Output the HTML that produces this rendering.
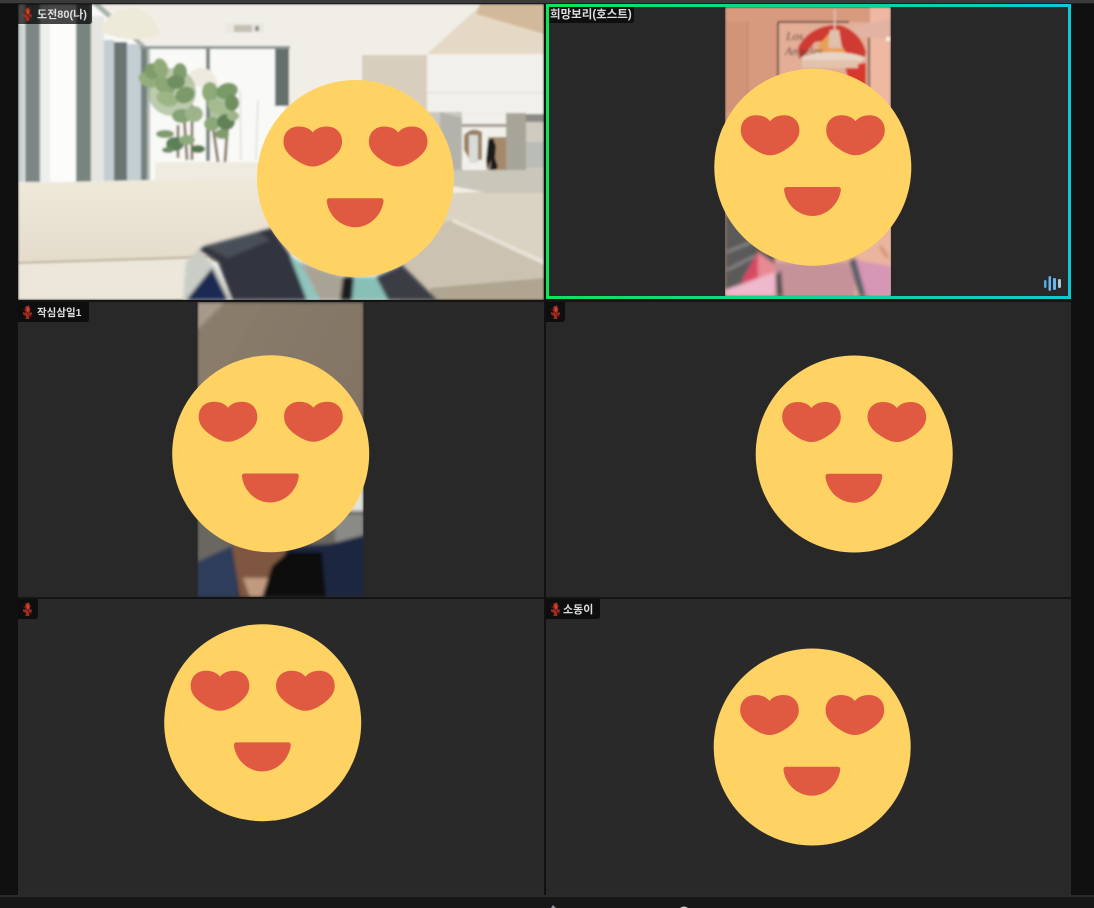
<!DOCTYPE html>
<html><head><meta charset="utf-8"><title>Video meeting</title>
<style>
html,body{margin:0;padding:0;background:#111;width:1094px;height:908px;overflow:hidden}
svg{display:block}
text{font-family:"Liberation Sans","Noto Sans CJK KR",sans-serif;font-weight:700;fill:#dedede}
</style></head><body>
<svg width="1094" height="908" viewBox="0 0 1094 908" xmlns="http://www.w3.org/2000/svg">
<defs>
<filter id="b1" x="-5%" y="-5%" width="110%" height="110%"><feGaussianBlur stdDeviation="1"/></filter>
<filter id="b2" x="-10%" y="-10%" width="120%" height="120%"><feGaussianBlur stdDeviation="1.800"/></filter>
<clipPath id="c1"><rect x="18" y="4" width="526" height="296"/></clipPath>
<clipPath id="c2"><rect x="725" y="7" width="166" height="289"/></clipPath>
<clipPath id="c3"><rect x="197.500" y="302" width="166" height="295"/></clipPath>
<linearGradient id="bd" x1="0" x2="1" y1="0" y2="0"><stop offset="0" stop-color="#0ce45a"/><stop offset="1" stop-color="#0cc9d6"/></linearGradient>
<linearGradient id="sofa" x1="0" x2="0" y1="0" y2="1"><stop offset="0" stop-color="#efe9db"/><stop offset="1" stop-color="#e4dccb"/></linearGradient>
<linearGradient id="wall3" x1="0" x2="1" y1="0" y2="1"><stop offset="0" stop-color="#8b7d6c"/><stop offset="1" stop-color="#7e7060"/></linearGradient>
<g id="emoji">
<circle r="98.500" fill="#ffd264"/>
<path transform="translate(-42.700,-32)" fill="#df5a40" d="M0-14C-3-18-8-20-14-20C-23-20-29.300-14-29.300-5C-29.300 3-24 8-19 12C-12 17-6 20 0 20C6 20 12 17 19 12C24 8 29.300 3 29.300-5C29.300-14 23-20 14-20C8-20 3-18 0-14Z"/>
<path transform="translate(42.700,-32)" fill="#df5a40" d="M0-14C-3-18-8-20-14-20C-23-20-29.300-14-29.300-5C-29.300 3-24 8-19 12C-12 17-6 20 0 20C6 20 12 17 19 12C24 8 29.300 3 29.300-5C29.300-14 23-20 14-20C8-20 3-18 0-14Z"/>
<path fill="#df5a40" d="M-26 19.700H25.500Q28.400 19.700 28 23C26 37 14 48.700-.3 48.700C-15 48.700-27 37-28.700 23Q-29 19.700-26 19.700Z"/>
</g>
<g id="mic">
<path d="M3.500 1.500L7 .5L8.500 4L7.500 8L9.500 7L10 9.500L7 11.500L7.500 14L3.500 14L4 11L1 9.500L1 7L3 8Z" fill="#a02c20"/>
<path d="M4.500 2.500L6.500 2.500L7 6L5 7.500Z" fill="#cf4a2c"/>
<path d="M1.500 4L9.500 12" stroke="#6a1c14" stroke-width="1.200"/>
</g>
</defs>

<rect width="1094" height="908" fill="#101010"/>
<rect width="1094" height="3" fill="#3a3a3a"/>
<rect y="3" width="1094" height="1" fill="#1b1b1b"/>

<!-- tile backgrounds -->
<rect x="18" y="302" width="526" height="295" fill="#282828"/>
<rect x="546" y="302" width="525" height="295" fill="#282828"/>
<rect x="18" y="599" width="526" height="296" fill="#292929"/>
<rect x="546" y="599" width="525" height="296" fill="#292929"/>
<rect x="546" y="4" width="525" height="295" fill="#282828"/>
<rect x="0" y="895" width="1094" height="2" fill="#2b2b2b"/>
<rect x="0" y="897" width="1094" height="11" fill="#171717"/>
<path d="M551 908L553 905L556 908Z" fill="#8a8f98"/>
<path d="M680 908Q684 905 688 908Z" fill="#cfcfcf"/>

<!-- Tile 1 photo -->
<g clip-path="url(#c1)"><g filter="url(#b1)">
<rect x="18" y="4" width="526" height="296" fill="#f1eee8"/>
<path d="M18 4H92L140 46H285V182H18Z" fill="#f9f9f7"/>
<rect x="25" y="4" width="15" height="178" fill="#7b8785"/>
<rect x="18" y="24" width="6" height="158" fill="#c9d2d0"/>
<rect x="40" y="4" width="11" height="178" fill="#eef0ee"/>
<rect x="50" y="4" width="26" height="178" fill="#fcfcfb"/>
<rect x="76" y="4" width="15" height="178" fill="#78847f"/>
<rect x="91" y="16" width="13" height="166" fill="#e5e6e2"/>
<rect x="104" y="40" width="10" height="142" fill="#c3ced3"/>
<rect x="114" y="42" width="13" height="140" fill="#6a7572"/>
<rect x="127" y="44" width="14" height="138" fill="#c3ced3"/>
<rect x="141" y="46" width="6" height="136" fill="#74807d"/>
<rect x="147" y="46" width="3" height="136" fill="#aeb9b6"/>
<rect x="206" y="46" width="4" height="115" fill="#79857f"/>
<rect x="275" y="46" width="14" height="60" fill="#65706c"/>
<rect x="140" y="46" width="150" height="3" fill="#8b9590"/>
<path d="M92 4L140 46H146L100 4Z" fill="#aab2ae"/>
<path d="M225 100L226 160M258 100L256 160M240 90L241 160" stroke="#dedede" stroke-width="1.500"/>
<!-- lamps -->
<path d="M101 32C104 15 120 7 134 8C148 9 158 22 160 35C142 42 118 40 101 32Z" fill="#eeead9"/>
<path d="M184 82C188 72 195 68 202 68C209 68 216 74 218 85C206 89 194 87 184 82Z" fill="#eeeadf"/>
<!-- vent -->
<rect x="226" y="23" width="38" height="10" fill="#eae7e0"/><rect x="234" y="25" width="18" height="7" fill="#c4c0b6"/><rect x="255" y="26" width="4" height="5" fill="#888"/>
<!-- stems -->
<path d="M187 160L184 115M192 160L192 105M218 162L212 120M225 162L228 120M178 158L178 125" stroke="#8a7a66" stroke-width="3" fill="none"/>
<!-- plant -->
<ellipse cx="172" cy="92" rx="24" ry="24" fill="#8aa673" opacity=".55"/>
<ellipse cx="222" cy="108" rx="13" ry="20" fill="#7f9c6a" opacity=".6"/>
<ellipse cx="148" cy="80" rx="10" ry="7" fill="#93ad7c" transform="rotate(30 148 80)"/>
<ellipse cx="153" cy="71" rx="9" ry="8" fill="#7f9c6b"/>
<ellipse cx="161" cy="68" rx="7" ry="10" fill="#90ab78" transform="rotate(-20 161 68)"/>
<ellipse cx="180" cy="72" rx="7" ry="9" fill="#809d6c"/>
<ellipse cx="165" cy="86" rx="11" ry="8" fill="#8ba775" transform="rotate(35 165 86)"/>
<ellipse cx="176" cy="82" rx="9" ry="7" fill="#6f8f60"/>
<ellipse cx="167" cy="99" rx="11" ry="7" fill="#9bb585" transform="rotate(20 167 99)"/>
<ellipse cx="185" cy="95" rx="10" ry="8" fill="#7b9a69" transform="rotate(-25 185 95)"/>
<ellipse cx="182" cy="116" rx="10" ry="7" fill="#86a374"/>
<ellipse cx="194" cy="114" rx="9" ry="8" fill="#9db489"/>
<ellipse cx="210" cy="92" rx="8" ry="10" fill="#8daa77"/>
<ellipse cx="227" cy="91" rx="11" ry="8" fill="#7a9a67" transform="rotate(-15 227 91)"/>
<ellipse cx="218" cy="107" rx="11" ry="7" fill="#a4bb8f" transform="rotate(25 218 107)"/>
<ellipse cx="232" cy="103" rx="7" ry="8" fill="#6f8f5e"/>
<ellipse cx="212" cy="124" rx="8" ry="7" fill="#8ca877"/>
<ellipse cx="226" cy="122" rx="9" ry="8" fill="#5f8257"/>
<ellipse cx="233" cy="116" rx="6" ry="5" fill="#9db58a"/>
<ellipse cx="222" cy="134" rx="7" ry="5" fill="#7f9c6d"/>
<ellipse cx="165" cy="134" rx="9" ry="4" fill="#7e9b6b"/>
<ellipse cx="175" cy="144" rx="9" ry="7" fill="#5b8058"/>
<ellipse cx="187" cy="140" rx="8" ry="5" fill="#8eaa7a"/>
<ellipse cx="198" cy="149" rx="7" ry="4" fill="#567a50"/>
<ellipse cx="168" cy="150" rx="6" ry="3" fill="#6d8d60"/>
<!-- sofa -->
<rect x="155" y="162" width="110" height="20" fill="#efebe0"/>
<path d="M18 183L150 180L270 178V262L18 263Z" fill="url(#sofa)"/>
<path d="M18 262L200 256L270 250L262 260L18 264Z" fill="#c0b49d"/>
<path d="M18 264L210 258L215 300H18Z" fill="#ece7da"/>
<!-- centre -->
<path d="M482 4H544V54H427Z" fill="#e5d9c5"/>
<path d="M480 4H544V34L476 14Z" fill="#d3b99c"/>
<rect x="427" y="55" width="117" height="58" fill="#f2f0eb"/>
<rect x="427" y="92" width="117" height="1" fill="#dcd9d2"/>
<rect x="362" y="55" width="65" height="70" fill="#d8cebd"/>
<path d="M427 112H462V172H427Z" fill="#c9c7bf"/>
<path d="M440 112L462 118V172H440Z" fill="#b3b3ab"/>
<rect x="462" y="115" width="44" height="56" fill="#f2f0ea"/>
<rect x="462" y="124" width="44" height="3" fill="#a09a8e"/>
<path d="M464 135Q472 126 482 132V160H470L464 150Z" fill="#9a7f5e"/>
<rect x="469" y="135" width="9" height="28" fill="#d9dcd8"/>
<rect x="488" y="137" width="18" height="33" fill="#a58a6b"/>
<path d="M488 140L493 138L496 146L495 158L498 167L495 171H490L491 160L487 170L486 160Z" fill="#1a1a1e"/>
<rect x="506" y="113" width="20" height="60" fill="#a7a498"/>
<rect x="526" y="114" width="18" height="56" fill="#cfcbc1"/>
<rect x="526" y="114" width="18" height="8" fill="#8a8a85"/>
<rect x="526" y="142" width="18" height="26" fill="#b9bdb6"/>
<path d="M440 170H544V194H440Z" fill="#c9c6ba"/>
<path d="M452 186L484 192L450 193Z" fill="#f1efe6"/>
<path d="M400 193H544V300H400Z" fill="#dad3c3"/>
<path d="M452 220L544 262V300H400V235Z" fill="#cbc2b1"/>
<path d="M452 218L544 260V265L452 222Z" fill="#e6e1d6"/>
<path d="M430 288L544 278V300H430Z" fill="#b0a590"/>
</g>
<g filter="url(#b2)">
<!-- person -->
<path d="M183 300L186 262L198 250L216 268L232 300Z" fill="#c9cdc6"/>
<path d="M186 300L212 268L228 300Z" fill="#1f2a52"/>
<path d="M199 250L205 246L272 228L320 300H232L218 262Z" fill="#32363f"/>
<path d="M205 246L258 232L270 240L228 258Z" fill="#4a5058"/>
<path d="M290 256L300 262L320 300H307Z" fill="#8fc5bd"/>
<path d="M300 262L345 277V300H320Z" fill="#a9a395"/>
<path d="M343 277H356L352 300H340Z" fill="#1a1a1e"/>
<path d="M354 277H378L390 300H352Z" fill="#88bfb6"/>
<path d="M376 277L402 265L437 300H388Z" fill="#3a3d45"/>
</g></g>

<!-- Tile 2 photo -->
<g clip-path="url(#c2)"><g filter="url(#b1)">
<rect x="725" y="7" width="166" height="289" fill="#d89a7e"/>
<rect x="725" y="22" width="23" height="90" fill="#d29478"/>
<path d="M747 21H748V112H747Z" fill="#b9826a"/>
<rect x="870" y="7" width="21" height="289" fill="#eeb8a2"/>
<rect x="778" y="22" width="92" height="70" fill="#e3ad96"/>
<path d="M778 22H849M778 22V92M869 32V90" stroke="#3d2f2a" stroke-width="1.500" fill="none"/>
<path d="M845 30L891 18V40L855 36Z" fill="#e2b3a2"/>
<path d="M798 48C806 30 828 22 843 26C858 32 864 44 866 52L864 60L846 56L835 40L815 42L800 60Z" fill="#cf3a30"/>
<path d="M818 46L832 30L848 56L818 58Z" fill="#e8a055"/>
<path d="M845 66L866 63L866 90L850 88Z" fill="#d8382f"/>
<text x="786" y="40" style="font-family:'Liberation Serif',serif;font-weight:400;font-style:italic;font-size:12px;fill:#4a2f28">Los</text>
<text x="785" y="55" style="font-family:'Liberation Serif',serif;font-weight:400;font-style:italic;font-size:12px;fill:#4a2f28">Angeles</text>
<rect x="834" y="9" width="1.500" height="24" fill="#e4c5b4"/>
<path d="M830 30H839L842 48H828Z" fill="#dfc1ae"/>
<path d="M800 58C815 50 850 50 866 58L860 62H806Z" fill="#e7d4c5"/>
<rect x="802" y="60" width="56" height="8" fill="#e3c2ab"/>
<rect x="886" y="37" width="5" height="4" fill="#fbeee0"/>
</g>
<g filter="url(#b2)">
<!-- bottom -->
<rect x="725" y="215" width="166" height="81" fill="#e9b59d"/>
<path d="M725 215H775V296H725Z" fill="#5a5a5a"/>
<path d="M727 252L752 242M727 270L755 256" stroke="#959595" stroke-width="2"/>
<path d="M741 282L758 252L776 270L772 282Z" fill="#d94a62"/>
<path d="M758 252L776 265L772 285L758 280Z" fill="#e88a94"/>
<path d="M725 290L775 272L780 296H725Z" fill="#f0b8cc"/>
<path d="M775 262H855V296H775Z" fill="#c6929a"/>
<path d="M776 275L781 270L783 296H777Z" fill="#4c5052"/>
<path d="M849 260L856 258L866 296H859Z" fill="#566066"/>
<path d="M856 260L891 266V296H866Z" fill="#d696b5"/>
<path d="M880 246L888 258" stroke="#b5482f" stroke-width="1.500"/>
</g></g>

<!-- Tile 3 photo -->
<g clip-path="url(#c3)"><g filter="url(#b2)">
<rect x="197" y="302" width="167" height="295" fill="url(#wall3)"/>
<path d="M197 302H225L197 330Z" fill="#a69a8c"/>
<path d="M197 490H363V597H197Z" fill="#6a6660"/>
<path d="M345 480H364V511H345Z" fill="#e2e2dc"/>
<rect x="340" y="512" width="24" height="2" fill="#444"/>
<path d="M335 514H364V542H335Z" fill="#8a8a86"/>
<path d="M197 562L232 546H290L330 544L364 535V597H197Z" fill="#1d2840"/>
<path d="M197 562L232 546L238 597H197Z" fill="#2d3c5c"/>
<path d="M232 546H288L280 566L260 597H240Z" fill="#7f5740"/>
<path d="M243 578L250 597H263L268 578Z" fill="#c29a80"/>
<path d="M272 566L288 552L322 552L326 597H262Z" fill="#0c0c10"/>
</g></g>

<!-- Emojis -->
<use href="#emoji" transform="translate(355.500,178.500)"/>
<use href="#emoji" transform="translate(812.800,167.300)"/>
<use href="#emoji" transform="translate(270.700,453.800)"/>
<use href="#emoji" transform="translate(854.200,454)"/>
<use href="#emoji" transform="translate(262.700,722.700)"/>
<use href="#emoji" transform="translate(812.200,747)"/>

<!-- green/cyan speaker border -->
<rect x="547.500" y="5.500" width="522" height="292" fill="none" stroke="url(#bd)" stroke-width="3"/>
<rect x="1044" y="280" width="2.500" height="8" rx="1.200" fill="#5aa8e6"/>
<rect x="1048.500" y="276" width="2.500" height="15" rx="1.200" fill="#66b4ee"/>
<rect x="1053" y="278" width="3" height="12" rx="1.200" fill="#6fb4e8"/>
<rect x="1058" y="279" width="3" height="9" rx="1.200" fill="#a7c8d8"/>

<!-- separators -->
<rect x="18" y="300" width="526" height="2" fill="#141414"/>
<rect x="546" y="299.500" width="525" height="2.500" fill="#141414"/>
<rect x="18" y="597" width="1053" height="2" fill="#141414"/>
<rect x="544" y="4" width="2" height="891" fill="#111"/>

<!-- Labels -->
<path d="M18 4H92V21Q92 24 89 24H18Z" fill="#000" fill-opacity=".72"/>
<use href="#mic" x="22" y="7"/>
<text x="37" y="18" font-size="11">도전80(나)</text>

<path d="M549 7H634V20Q634 23 631 23H549Z" fill="#000" fill-opacity=".62"/>
<text x="550" y="18" font-size="11.500">희망보리(호스트)</text>

<path d="M18 302H89V319Q89 322 86 322H18Z" fill="#0e0e0e"/>
<use href="#mic" x="22" y="305"/>
<text x="37" y="316" font-size="10.500">작심삼일1</text>

<path d="M546 302H565V319Q565 322 562 322H546Z" fill="#0e0e0e"/>
<use href="#mic" x="550" y="305"/>

<path d="M18 599H38V616Q38 619 35 619H18Z" fill="#0e0e0e"/>
<use href="#mic" x="22" y="602"/>

<path d="M546 599H600V616Q600 619 597 619H546Z" fill="#0e0e0e"/>
<use href="#mic" x="550" y="602"/>
<text x="563" y="613" font-size="11">소동이</text>
</svg>
</body></html>
